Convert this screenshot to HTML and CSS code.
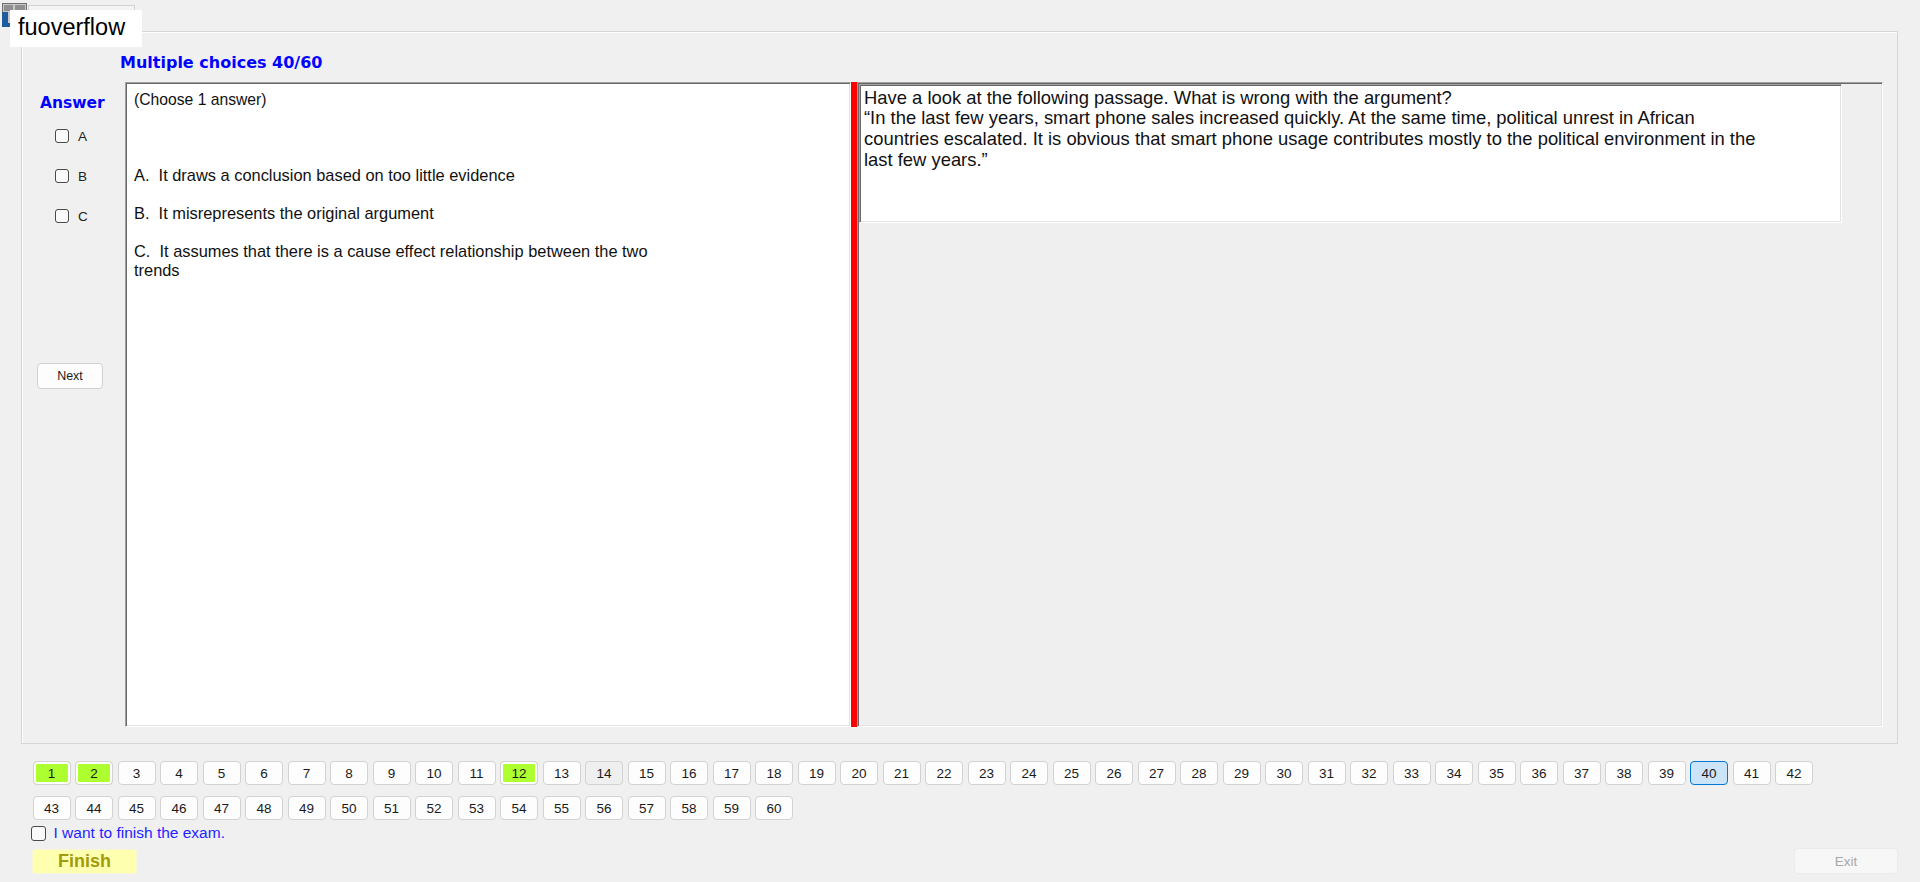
FILE: index.html
```html
<!DOCTYPE html>
<html lang="en">
<head>
<meta charset="utf-8">
<title>Exam</title>
<link rel="stylesheet" href="styles.css">
</head>
<body>
<div class="window">
  <div class="tabstrip">
    <svg class="app-icon" width="28" height="28" viewBox="0 0 28 28" aria-hidden="true">
      <rect x="2.5" y="3.5" width="24" height="23" fill="#c9c9c9" stroke="#6f6f6f"/>
      <rect x="4" y="5" width="9" height="6" fill="#8f8f8f"/>
      <rect x="15" y="5" width="10" height="6" fill="#8f8f8f"/>
      <rect x="2" y="12" width="6" height="15" fill="#1d5c9e"/>
      <rect x="2" y="23" width="14" height="4" fill="#1d5c9e"/>
    </svg>
    <div class="tab"></div>
  </div>

  <section class="group">
    <h1 class="heading">Multiple choices 40/60</h1>
    <div class="work">
      <aside class="answer-col">
        <div class="answer-title">Answer</div>
        <label class="opt"><span class="box"></span><span class="opt-text">A</span></label>
        <label class="opt"><span class="box"></span><span class="opt-text">B</span></label>
        <label class="opt"><span class="box"></span><span class="opt-text">C</span></label>
        <button class="btn next">Next</button>
      </aside>

      <div class="split">
        <div class="question sunken">
          <p class="prompt">(Choose 1 answer)</p>
          <ul class="choices">
            <li>A.&nbsp; It draws a conclusion based on too little evidence</li>
            <li>B.&nbsp; It misrepresents the original argument</li>
            <li>C.&nbsp; It assumes that there is a cause effect relationship between the two trends</li>
          </ul>
        </div>
        <div class="splitter"></div>
        <div class="passage-pane sunken">
          <div class="passage sunken">Have a look at the following passage. What is wrong with the argument?<br>“In the last few years, smart phone sales increased quickly. At the same time, political unrest in African<br>countries escalated. It is obvious that smart phone usage contributes mostly to the political environment in the<br>last few years.”</div>
        </div>
      </div>
    </div>
  </section>

  <nav class="pager">
    <button class="pg done">1</button>
    <button class="pg done">2</button>
    <button class="pg">3</button>
    <button class="pg">4</button>
    <button class="pg">5</button>
    <button class="pg">6</button>
    <button class="pg">7</button>
    <button class="pg">8</button>
    <button class="pg">9</button>
    <button class="pg">10</button>
    <button class="pg">11</button>
    <button class="pg done">12</button>
    <button class="pg">13</button>
    <button class="pg hover">14</button>
    <button class="pg">15</button>
    <button class="pg">16</button>
    <button class="pg">17</button>
    <button class="pg">18</button>
    <button class="pg">19</button>
    <button class="pg">20</button>
    <button class="pg">21</button>
    <button class="pg">22</button>
    <button class="pg">23</button>
    <button class="pg">24</button>
    <button class="pg">25</button>
    <button class="pg">26</button>
    <button class="pg">27</button>
    <button class="pg">28</button>
    <button class="pg">29</button>
    <button class="pg">30</button>
    <button class="pg">31</button>
    <button class="pg">32</button>
    <button class="pg">33</button>
    <button class="pg">34</button>
    <button class="pg">35</button>
    <button class="pg">36</button>
    <button class="pg">37</button>
    <button class="pg">38</button>
    <button class="pg">39</button>
    <button class="pg current">40</button>
    <button class="pg">41</button>
    <button class="pg">42</button>
    <button class="pg">43</button>
    <button class="pg">44</button>
    <button class="pg">45</button>
    <button class="pg">46</button>
    <button class="pg">47</button>
    <button class="pg">48</button>
    <button class="pg">49</button>
    <button class="pg">50</button>
    <button class="pg">51</button>
    <button class="pg">52</button>
    <button class="pg">53</button>
    <button class="pg">54</button>
    <button class="pg">55</button>
    <button class="pg">56</button>
    <button class="pg">57</button>
    <button class="pg">58</button>
    <button class="pg">59</button>
    <button class="pg">60</button>
  </nav>

  <label class="confirm"><span class="box"></span><span class="confirm-text">I want to finish the exam.</span></label>

  <div class="actions">
    <button class="finish">Finish</button>
    <button class="exit" disabled>Exit</button>
  </div>

  <div class="brand">fuoverflow</div>
</div>
</body>
</html>
```

FILE: styles.css
```css
* {
  box-sizing: border-box;
}

html,
body {
  margin: 0;
  padding: 0;
}

body {
  width: 1920px;
  height: 882px;
  overflow: hidden;
  background: #f0f0f0;
  color: #111;
  font-family: "Liberation Sans", Arial, sans-serif;
}

.window {
  position: relative;
  height: 882px;
}

/* window icon and the tab header above the group */
.tabstrip {
  height: 31px;
  display: flex;
  align-items: flex-start;
}

.app-icon {
  display: block;
  flex: none;
}

.tab {
  width: 107px;
  height: 26px;
  margin-top: 5px;
  border: 1px solid #d2d2d2;
  border-bottom: none;
  background: #f4f4f4;
}

/* etched group frame around the question area */
.group {
  margin: 0 22px 0 21px;
  padding: 22px 0 16px 0;
  border: 1px solid #d6d6d6;
  box-shadow: inset 1px 1px 0 #fff;
}

.heading {
  margin: 0 0 10px 98px;
  height: 18px;
  font-family: "DejaVu Sans", Verdana, sans-serif;
  font-size: 16px;
  font-weight: bold;
  line-height: 18px;
  color: #0000ff;
}

.work {
  display: flex;
  height: 645px;
}

/* left column: answer checkboxes */
.answer-col {
  width: 103px;
  flex: none;
  display: flex;
  flex-direction: column;
}

.answer-title {
  margin: 12px 0 0 18px;
  font-family: "DejaVu Sans", Verdana, sans-serif;
  font-size: 15.5px;
  font-weight: bold;
  line-height: 18px;
  color: #0000ff;
}

.opt {
  height: 40px;
  display: flex;
  align-items: center;
  padding-left: 33px;
}

.opt:first-of-type {
  margin-top: 4px;
}

.box {
  width: 14px;
  height: 14px;
  flex: none;
  border: 1px solid #4a4a4a;
  border-radius: 3px;
  background: #fafafa;
}

.opt-text {
  margin-left: 9px;
  font-size: 13.5px;
  color: #222;
}

.btn {
  font-family: "Liberation Sans", Arial, sans-serif;
  background: #fdfdfd;
  border: 1px solid #d0d0d0;
  border-radius: 4px;
  color: #1a1a1a;
  padding: 0;
}

.next {
  margin: 127px 0 0 15px;
  width: 66px;
  height: 26px;
  font-size: 12.5px;
}

/* question / splitter / passage */
.split {
  flex: 1;
  display: flex;
  margin-right: 14px;
}

.sunken {
  border: 1px solid;
  border-color: #a0a0a0 #fff #fff #a0a0a0;
  box-shadow: inset 1px 1px 0 #696969, inset -1px -1px 0 #e3e3e3;
}

.question {
  width: 726px;
  flex: none;
  background: #fff;
  padding: 7px 8px;
  font-size: 16.4px;
  line-height: 19px;
  color: #111;
}

.prompt {
  margin: 0;
  font-size: 15.7px;
}

.choices {
  list-style: none;
  margin: 57px 0 0 0;
  padding: 0;
  display: flex;
  flex-direction: column;
  gap: 19px;
}

.choices li {
  max-width: 545px;
}

.splitter {
  width: 6px;
  flex: none;
  background: #ff0000;
}

.passage-pane {
  flex: 1;
  padding: 1px;
  background: #efefef;
}

.passage {
  width: 983px;
  height: 139px;
  padding: 2.5px 4px;
  background: #fff;
  font-size: 18.4px;
  line-height: 20.8px;
  color: #111;
}

/* question navigator */
.pager {
  width: 1800px;
  margin: 17px 0 0 32.5px;
  display: flex;
  flex-wrap: wrap;
  column-gap: 4.5px;
  row-gap: 11px;
}

.pg {
  width: 38px;
  height: 24px;
  padding: 0;
  background: #fdfdfd;
  border: 1px solid #d2d2d2;
  border-radius: 4px;
  font-family: "Liberation Sans", Arial, sans-serif;
  font-size: 13.5px;
  color: #1a1a1a;
}

.pg.done {
  background: #adff2f;
  box-shadow: inset 0 0 0 2px #fff;
}

.pg.hover {
  background: #efefef;
}

.pg.current {
  background: #cce4f7;
  border-color: #0078d4;
}

.confirm {
  height: 20px;
  margin: 3px 0 0 31px;
  display: flex;
  align-items: center;
}

.confirm .box {
  width: 15px;
  height: 15px;
}

.confirm-text {
  margin-left: 7.5px;
  font-size: 15.5px;
  color: #1f1fff;
}

.actions {
  display: flex;
  justify-content: space-between;
  align-items: flex-end;
  margin: 5px 22px 0 32px;
}

.finish {
  width: 105px;
  height: 25px;
  padding: 0;
  background: #ffffb0;
  border: 1px solid #f7f7d8;
  border-radius: 3px;
  font-family: "Liberation Sans", Arial, sans-serif;
  font-size: 18px;
  font-weight: bold;
  color: #a19c0c;
}

.exit {
  width: 104px;
  height: 26px;
  padding: 0;
  background: #f7f7f7;
  border: 1px solid #ebebeb;
  border-radius: 4px;
  font-family: "Liberation Sans", Arial, sans-serif;
  font-size: 13.5px;
  color: #a8a8a8;
}

/* caption box laid over the window corner */
.brand {
  position: absolute;
  left: 10px;
  top: 10px;
  width: 132px;
  height: 37px;
  padding: 2px 0 0 8px;
  background: #fff;
  font-size: 23.5px;
  line-height: 31px;
  color: #000;
}
```
